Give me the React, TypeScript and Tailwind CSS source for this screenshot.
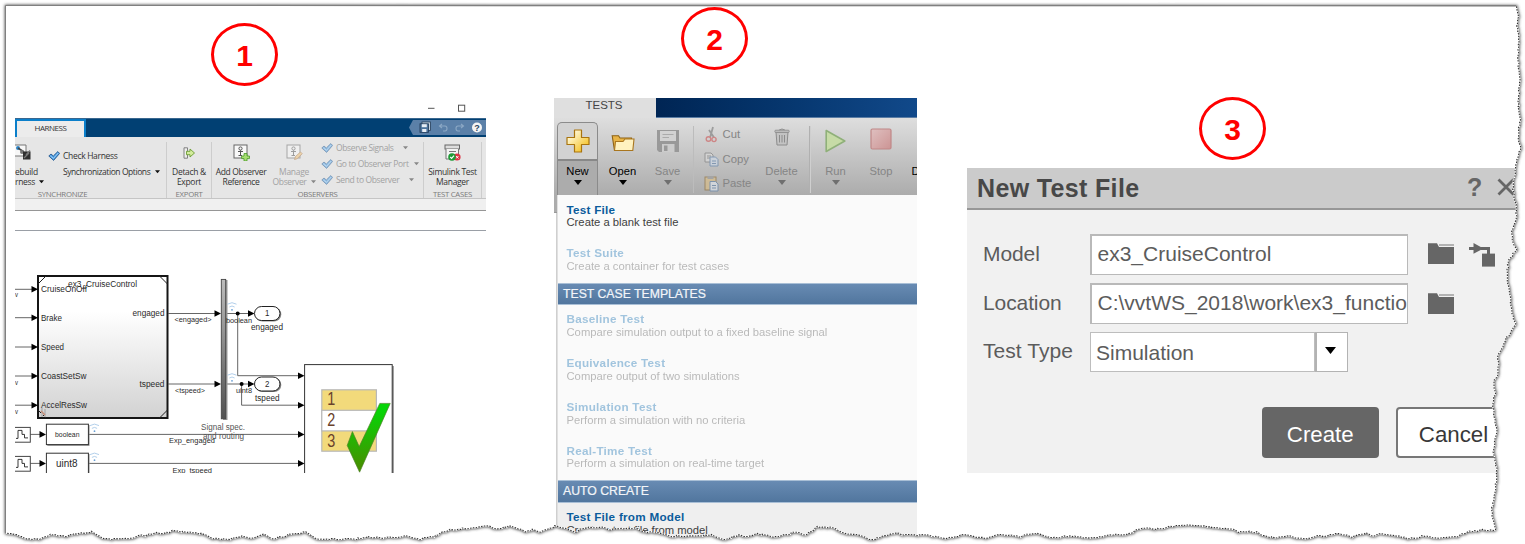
import React from "react";

/* ---------- shared pieces ---------- */

function StepBadge({ n, className }: { n: number; className: string }) {
  return (
    <div
      className={`flex h-[63px] w-[67px] shrink-0 items-center justify-center rounded-[50%] border-[3px] border-[#ff0000] pt-[2px] text-[30px] leading-none font-bold text-[#ff0000] ${className}`}
    >
      {n}
    </div>
  );
}

function Caret({ className }: { className: string }) {
  return (
    <svg viewBox="0 0 8 5" className={className}>
      <path d="M0 0H8L4 5Z" fill="currentColor" />
    </svg>
  );
}

/* ---------- panel 1: harness ribbon ---------- */

function Check({ faded = false }: { faded?: boolean }) {
  return (
    <svg viewBox="0 0 12 10" className={`h-[10px] w-[12px] shrink-0 ${faded ? "opacity-55" : ""}`}>
      <path d="M0.8 5L3 3L5.3 5L9.8 0.6L11.6 2.4L5.6 9.4Z" fill="#4a9be0" stroke="#1d4f86" strokeWidth="0.8" />
      <path d="M2.3 4.8L5.5 7.4L10.2 2" stroke="#a9d6fa" strokeWidth="0.9" fill="none" />
    </svg>
  );
}

function RebuildIcon() {
  return (
    <svg viewBox="0 0 16 16" className="h-4 w-4">
      <path d="M0 1H11V12H0" fill="#f7f7f7" stroke="#777" />
      <circle cx="3" cy="4" r="2" fill="#2f86c8" />
      <path d="M3 4L9 8" stroke="#444" strokeWidth="1.6" fill="none" />
      <circle cx="7" cy="8" r="2" fill="#777" />
      <rect x="8" y="7.5" width="7.5" height="8" fill="#2f2f2f" />
      <path d="M15 6.5L11 11M9 14L14 9" stroke="#777" strokeWidth="1.3" />
    </svg>
  );
}

function DetachIcon() {
  return (
    <svg viewBox="0 0 12 12" className="h-3 w-3">
      <path d="M1 .8H4.5V11.2H1Z" fill="#eee" stroke="#777" strokeWidth="0.9" />
      <path d="M3.5 4.3H7V2L11.5 6L7 10V7.7H3.5Z" fill="#d3ec9c" stroke="#6b9c33" strokeWidth="0.9" />
    </svg>
  );
}

function ObserverIcon({ pencil = false }: { pencil?: boolean }) {
  return (
    <svg viewBox="0 0 17 17" className={`h-[17px] w-[17px] ${pencil ? "opacity-50" : ""}`}>
      <rect x="1" y="1" width="13" height="13" fill="#f8f8f8" stroke="#666" />
      <circle cx="7.5" cy="4.5" r="1.6" fill="none" stroke="#555" />
      <path d="M7.5 6.3V12M5 7.5H10M5.5 11.5H9" stroke="#555" strokeWidth="1" />
      {pencil ? (
        <path d="M8.5 15.5L9.5 12.5L14.5 8L16.2 9.7L11.2 14.7Z" fill="#f1c173" stroke="#a66a30" strokeWidth="0.8" />
      ) : (
        <path d="M11 9.5H14V12H16.5V14.6H14V17H11V14.6H8.6V12H11Z" fill="#a6de71" stroke="#4a9a28" strokeWidth="0.8" />
      )}
    </svg>
  );
}

function TestManagerIcon() {
  return (
    <svg viewBox="0 0 17 17" className="h-[17px] w-[17px]">
      <rect x="1" y="1" width="14.5" height="4" fill="#ddd" stroke="#666" />
      <path d="M2 5V15H14.5V5" fill="#f3f3f3" stroke="#777" />
      <path d="M5 7.5H12" stroke="#777" />
      <circle cx="13" cy="13" r="3.6" fill="#dd3345" />
      <path d="M12 12L14.5 14.5M14.5 12L12 14.5" stroke="#fff" strokeWidth="0.9" />
      <circle cx="8" cy="13" r="3.8" fill="#1e9a36" />
      <path d="M6.2 13L7.6 14.4L10 11.6" stroke="#fff" strokeWidth="1.1" fill="none" />
    </svg>
  );
}

function QuickAccess() {
  return (
    <svg viewBox="0 0 77 15" className="h-[15px] w-[77px]">
      <path d="M0 7.5L4 0H77V15H4Z" fill="#5b80a8" />
      <rect x="13" y="2" width="8.5" height="8.5" fill="#c4d2e0" stroke="#243c58" strokeWidth="0.8" />
      <rect x="11" y="3.8" width="8.5" height="8.5" fill="#4c739c" stroke="#1f3754" strokeWidth="0.8" />
      <rect x="12.8" y="4.2" width="5" height="3" fill="#e7edf4" />
      <rect x="13.2" y="9" width="4.2" height="3" fill="#e7edf4" />
      <path d="M33 4L30.5 6L33 8M31 6H36Q38 6 38 8.5T36 11H34" stroke="#8ca8c5" strokeWidth="1.1" fill="none" />
      <path d="M52 4L54.5 6L52 8M54 6H49Q47 6 47 8.5T49 11H51" stroke="#8ca8c5" strokeWidth="1.1" fill="none" />
      <circle cx="68" cy="7.5" r="5" fill="#f4f4f4" />
      <text x="68" y="11" textAnchor="middle" fontSize="9" fontWeight="700" fill="#29435f">?</text>
    </svg>
  );
}

function Stack({ icon, lines, caret, muted, className }: { icon: React.ReactNode; lines: string[]; caret?: boolean; muted?: boolean; className: string }) {
  return (
    <div className={`flex shrink-0 flex-col items-center ${muted ? "text-[#a2a2a2]" : "text-[#333]"} ${className}`}>
      <div className="flex h-[21px] items-center justify-center">{icon}</div>
      <div className="mt-[3px] h-[11px] leading-[11px] whitespace-nowrap">{lines[0]}</div>
      <div className="flex h-[10px] items-center gap-1 leading-[10px] whitespace-nowrap">
        {lines[1]}
        {caret && <Caret className={`h-[3.5px] w-[5px] ${muted ? "text-[#888]" : "text-[#111]"}`} />}
      </div>
    </div>
  );
}

function Group({ label, className, children }: { label: string; className: string; children: React.ReactNode }) {
  return (
    <div className={`flex h-[56px] shrink-0 flex-col border-r border-[#cdcdcd] ${className}`}>
      <div className="flex h-[47px] shrink-0">{children}</div>
      <div className="pt-px text-center text-[7.8px] leading-[9px] tracking-[-0.3px] text-[#7b7b7b]">{label}</div>
    </div>
  );
}

function ObserverLine({ label, gap }: { label: string; gap: string }) {
  return (
    <div className="flex h-4 items-center text-[#a2a2a2]">
      <Check faded />
      <span className="ml-[3px] tracking-[-0.36px] whitespace-nowrap">{label}</span>
      <Caret className={`h-[3.5px] w-[5px] shrink-0 text-[#888] ${gap}`} />
    </div>
  );
}

function Wifi({ x, y }: { x: number; y: number }) {
  return (
    <g transform={`translate(${x} ${y})`} fill="none" stroke="#a9c9e8" strokeWidth="0.9">
      <path d="M-4.5 1.2Q0 -1.8 4.5 1.2M-2.6 4Q0 2 2.6 4" />
      <circle cx="0" cy="6.8" r="0.9" fill="#6a9fd4" stroke="none" />
    </g>
  );
}

function Arrow({ x, y }: { x: number; y: number }) {
  return <path d={`M${x - 6.5} ${y - 3.3}L${x} ${y}L${x - 6.5} ${y + 3.3}Z`} fill="#000" />;
}

function T({ x, y, w, size = 8.3, fill = "#2a2a2a", children }: { x: number; y: number; w: number; size?: number; fill?: string; children: string }) {
  return (
    <text x={x} y={y} fontSize={size} fill={fill} textLength={w} lengthAdjust="spacingAndGlyphs">
      {children}
    </text>
  );
}

function Diagram() {
  const inputs: [string, number, number][] = [
    ["CruiseOnOff", 289.3, 46],
    ["Brake", 317.7, 21],
    ["Speed", 347, 23],
    ["CoastSetSw", 376, 45.5],
    ["AccelResSw", 405.2, 46],
  ];
  return (
    <svg viewBox="15 231 471 242" className="h-[242px] w-[471px] shrink-0">
      <defs>
        <linearGradient id="block" x1="0" y1="0" x2="0" y2="1">
          <stop offset="0.25" stopColor="#ffffff" />
          <stop offset="1" stopColor="#d2d2d2" />
        </linearGradient>
        <linearGradient id="bar" x1="0" y1="0" x2="0" y2="1">
          <stop offset="0" stopColor="#bcbcbc" />
          <stop offset="1" stopColor="#505050" />
        </linearGradient>
        <linearGradient id="tick" x1="0" y1="0" x2="0" y2="1">
          <stop offset="0.1" stopColor="#06d506" />
          <stop offset="1" stopColor="#4b8b00" />
        </linearGradient>
      </defs>
      <rect x="38" y="276" width="129.5" height="142" fill="url(#block)" stroke="#151515" strokeWidth="2" />
      <path d="M38 284L46 276M159.5 276L167.5 284M159.5 418L167.5 410M38 410L46 418" stroke="#222" strokeWidth="1" />
      <path d="M42 408V417M45 409V417" stroke="#bbb" strokeWidth="2" />
      <path d="M41 411L45 415" stroke="#c68d77" strokeWidth="1.5" />
      <T x={68} y={287.3} w={69}>ex3_CruiseControl</T>
      {inputs.map(([name, y, w]) => (
        <g key={name}>
          <path d={`M15 ${y}H33`} stroke="#555" strokeWidth="0.9" />
          <Arrow x={38} y={y} />
          <T x={41} y={y + 3} w={w}>{name}</T>
        </g>
      ))}
      <T x={15} y={297} w={3} size={7}>v</T>
      <T x={15} y={385} w={3} size={7}>v</T>
      <T x={15} y={414} w={3} size={7}>v</T>
      <T x={132.5} y={316.3} w={32}>engaged</T>
      <T x={139.5} y={387} w={25}>tspeed</T>
      <path d="M168 313.5H216M168 384H216M227 313.5H250M227 384H250M237.7 313.5V375.7H300M241.6 384V405.2H300M88 434.4H300M88 463.4H300M30 434.4H42M30 463.4H42" stroke="#555" strokeWidth="0.9" fill="none" />
      <Arrow x={221} y={313.5} />
      <Arrow x={221} y={384} />
      <T x={174.5} y={322} w={37} size={7.6}>{"<engaged>"}</T>
      <T x={175} y={392.7} w={30} size={7.6}>{"<tspeed>"}</T>
      <rect x="223" y="280" width="4.5" height="140" fill="#999" />
      <rect x="221.3" y="279.4" width="4.4" height="139.4" fill="url(#bar)" stroke="#444" strokeWidth="0.9" />
      <Wifi x={232} y={303} />
      <Wifi x={232} y={374} />
      {[313.5, 384].map((y, i) => (
        <g key={y}>
          <circle cx={i ? 241.6 : 237.7} cy={y} r="2" fill="#000" />
          <Arrow x={254.5} y={y} />
          <rect x="255.3" y={y - 6.3} width="26" height="14.4" rx="7.2" fill="#888" />
          <rect x="254.5" y={y - 7} width="25.5" height="14" rx="7" fill="#fff" stroke="#222" strokeWidth="1" />
          <T x={265} y={y + 2.9} w={4.4}>{String(i + 1)}</T>
        </g>
      ))}
      <T x={226} y={322.6} w={26} size={7.6}>boolean</T>
      <T x={236} y={393} w={16} size={7.6}>uint8</T>
      <T x={251} y={330} w={32}>engaged</T>
      <T x={255} y={400.7} w={24.5}>tspeed</T>
      <T x={201} y={429.5} w={44} fill="#555">Signal spec.</T>
      <T x={203} y={439} w={41} fill="#555">and routing</T>
      <T x={169} y={443} w={46} size={7.8}>Exp_engaged</T>
      <T x={172.5} y={472.6} w={39.5} size={7.8}>Exp_tspeed</T>
      {[434.4, 463.4].map((y) => (
        <g key={y}>
          <rect x="10" y={y - 7} width="20.3" height="14.8" fill="#fff" stroke="#444" strokeWidth="1" />
          <path d={`M16 ${y + 4}H18V${y - 4}H22V${y}H24.5V${y + 3.5}H28`} stroke="#222" fill="none" strokeWidth="0.9" />
          <Arrow x={46} y={y} />
          <rect x="47.3" y={y - 9.4} width="42.2" height="20.8" fill="#888" />
          <rect x="46.4" y={y - 10.2} width="42" height="20.4" fill="#fff" stroke="#333" strokeWidth="1" />
          <Wifi x={94.5} y={y - 10} />
        </g>
      ))}
      <T x={55} y={437} w={24.5} size={7.4}>boolean</T>
      <T x={56} y={467} w={21.5} size={10}>uint8</T>
      <rect x="304.6" y="364.6" width="87.6" height="120" fill="#fff" stroke="#333" strokeWidth="1" />
      <path d="M393 366V480" stroke="#444" strokeWidth="1" />
      {[375.7, 405.2, 434.4, 463.4].map((y) => (
        <Arrow key={y} x={304.5} y={y} />
      ))}
      <rect x="321.8" y="389.8" width="54.6" height="61.4" fill="#f2da7b" stroke="#b8b8b8" strokeWidth="1.2" />
      <rect x="321.8" y="410.3" width="54.6" height="20.6" fill="#fff" stroke="#b8b8b8" strokeWidth="1.2" />
      <T x={327.3} y={405.3} w={8} size={17.5} fill="#6a422c">1</T>
      <T x={327.3} y={426} w={8} size={17.5} fill="#6a422c">2</T>
      <T x={327.3} y={447} w={8} size={17.5} fill="#6a422c">3</T>
      <path d="M379.8 403.4H390.2L359.6 472.2L347.2 445.4L352.4 431.6L359.2 446.6Z" fill="url(#tick)" stroke="#4d8428" strokeWidth="0.7" />
    </svg>
  );
}

function HarnessPanel() {
  return (
    <section className="flex h-[369px] w-[471px] flex-col overflow-hidden bg-white">
      <div className="flex h-[14px] justify-end pr-[20px]">
        <svg viewBox="0 0 40 14" className="h-[14px] w-10">
          <path d="M2 4.3H8.5" stroke="#555" strokeWidth="1" />
          <rect x="32.5" y="1.2" width="6.2" height="6" fill="none" stroke="#555" strokeWidth="1" />
        </svg>
      </div>
      <div className="flex h-[19px] items-end justify-between border-t border-[#39678f] bg-[#014073]">
        <div className="flex h-[18px] w-[71px] items-center justify-center border-x-2 border-t-2 border-[#0b7fca] bg-[#ececec] pb-[2px] font-['Open_Sans',sans-serif] text-[8px] tracking-[-0.45px] text-[#333]">
          HARNESS
        </div>
        <div className="mb-[2px] flex h-[15px]"><QuickAccess /></div>
      </div>
      <div className="flex h-[62px] shrink-0 items-end border-b border-[#c5c5c5] bg-[#e6e6e6] font-['Open_Sans',sans-serif] text-[8.5px] tracking-[-0.32px] text-[#333]">
        <Group label="SYNCHRONIZE" className="w-[152px] [&>div:last-child]:pr-[56px]">
          <div className="flex w-[30px] flex-col items-start">
            <div className="-mt-[2px] flex h-[23px] items-center"><RebuildIcon /></div>
            <div className="mt-[3px] h-[11px] leading-[11px]">ebuild</div>
            <div className="flex h-[10px] items-center gap-1 leading-[10px]">
              rness <Caret className="h-[3.5px] w-[5px] text-[#111]" />
            </div>
          </div>
          <div className="flex flex-col pt-[6px] pl-[3px]">
            <div className="flex h-4 items-center gap-[3px]"><Check />Check Harness</div>
            <div className="flex h-4 items-center gap-[5px] pl-[15px] tracking-[-0.43px] whitespace-nowrap">
              Synchronization Options <Caret className="h-[3.5px] w-[5px] text-[#111]" />
            </div>
          </div>
        </Group>
        <Group label="EXPORT" className="w-[45px]">
          <Stack className="w-[44px]" icon={<DetachIcon />} lines={["Detach &", "Export"]} />
        </Group>
        <Group label="OBSERVERS" className="w-[212px]">
          <Stack className="w-[58px]" icon={<ObserverIcon />} lines={["Add Observer", "Reference"]} />
          <Stack className="w-[48px]" icon={<ObserverIcon pencil />} lines={["Manage", "Observer"]} caret muted />
          <div className="-mt-[2px] flex flex-col pl-[3px]">
            <ObserverLine label="Observe Signals" gap="ml-[9px]" />
            <ObserverLine label="Go to Observer Port" gap="ml-[5px]" />
            <ObserverLine label="Send to Observer" gap="ml-[10px]" />
          </div>
        </Group>
        <Group label="TEST CASES" className="w-[58px]">
          <Stack className="w-[57px]" icon={<TestManagerIcon />} lines={["Simulink Test", "Manager"]} />
        </Group>
      </div>
      <div className="h-[12px] shrink-0 border-b border-[#969696] bg-[#f0f0f0]" />
      <div className="h-[20px] shrink-0 border-b border-[#9a9fa6] bg-white" />
      <Diagram />
    </section>
  );
}

/* ---------- panel 2: test manager menu ---------- */

function PlusIcon() {
  return (
    <svg viewBox="0 0 24 24" className="h-6 w-6">
      <defs>
        <linearGradient id="gold" x1="0" y1="0" x2="1" y2="1">
          <stop offset="0.15" stopColor="#fffbe0" />
          <stop offset="1" stopColor="#f3b600" />
        </linearGradient>
      </defs>
      <path d="M8.5 1H15.5V8.5H23V15.5H15.5V23H8.5V15.5H1V8.5H8.5Z" fill="url(#gold)" stroke="#a9740e" strokeWidth="1.2" strokeLinejoin="round" />
    </svg>
  );
}

function OpenIcon() {
  return (
    <svg viewBox="0 0 24 18" className="h-[18px] w-6">
      <path d="M3.5 16.5L1.2 1.8H7.5L9 4H20.5V8" fill="#e8b447" stroke="#8d6215" strokeWidth="1.1" />
      <path d="M3.5 16.5L4.5 7.5H12L14 5H23L21.8 16.5Z" fill="#fff2c0" stroke="#a9761f" strokeWidth="1.1" />
    </svg>
  );
}

function SaveIcon() {
  return (
    <svg viewBox="0 0 24 24" className="h-6 w-6">
      <path d="M1 1H23V23H3L1 21Z" fill="#999" />
      <rect x="4" y="2" width="16" height="10" fill="#d2d2d2" />
      <path d="M6.5 5.5H17.5M6.5 8.5H13" stroke="#aaa" />
      <rect x="6" y="15" width="12.5" height="8" fill="#ccc" />
      <rect x="8" y="16.5" width="3.5" height="5.5" fill="#999" />
    </svg>
  );
}

function CutIcon() {
  return (
    <svg viewBox="0 0 15 17" className="h-[17px] w-[15px] opacity-60">
      <path d="M9 1L6.2 11M5 4L10 11.5" stroke="#777" strokeWidth="1.8" />
      <circle cx="4.5" cy="13" r="2.3" fill="none" stroke="#c55" strokeWidth="1.4" />
      <circle cx="10" cy="13.5" r="2.1" fill="none" stroke="#c55" strokeWidth="1.4" />
    </svg>
  );
}

function CopyIcon() {
  return (
    <svg viewBox="0 0 15 15" className="h-[15px] w-[15px] opacity-60">
      <path d="M1 1H7L9 3V10H1Z" fill="#ddd" stroke="#777" />
      <path d="M3 4H7M3 6H6" stroke="#777" />
      <path d="M6 5H11.5L14 7.5V14H6Z" fill="#cfdbea" stroke="#5b7fa8" />
      <path d="M8 9H12M8 11.5H12" stroke="#5b7fa8" />
    </svg>
  );
}

function PasteIcon() {
  return (
    <svg viewBox="0 0 15 17" className="h-[17px] w-[15px] opacity-60">
      <rect x="1" y="2" width="11" height="13" fill="#dfc084" stroke="#8b6b34" />
      <rect x="3.5" y="1" width="6" height="3" fill="#999" />
      <path d="M6 6.5H11.5L14 9V16H6Z" fill="#e6ecf4" stroke="#5b7fa8" />
      <path d="M8 10.5H12M8 13H12" stroke="#5b7fa8" />
    </svg>
  );
}

function TrashIcon() {
  return (
    <svg viewBox="0 0 16 18" className="h-[18px] w-4">
      <path d="M2 4H14L13 17H3Z" fill="#c3c3c3" stroke="#8c8c8c" />
      <path d="M5.5 7V14.5M8 7V14.5M10.5 7V14.5" stroke="#8c8c8c" />
      <path d="M5 2.2Q8 -0.2 11 2.2" stroke="#8c8c8c" fill="none" />
      <rect x="0.8" y="2.2" width="14.4" height="2.3" rx="1" fill="#bbb" stroke="#8c8c8c" strokeWidth="0.8" />
    </svg>
  );
}

function RunIcon() {
  return (
    <svg viewBox="0 0 21 24" className="h-6 w-[21px]">
      <path d="M1.2 1.5L19.8 12L1.2 22.5Z" fill="#c6dba6" stroke="#8fb079" strokeWidth="1.6" strokeLinejoin="round" />
    </svg>
  );
}

function StopIcon() {
  return (
    <svg viewBox="0 0 22 22" className="h-[22px] w-[22px]">
      <defs>
        <linearGradient id="stop" x1="0" y1="0" x2="1" y2="1">
          <stop offset="0" stopColor="#dfc0c0" />
          <stop offset="1" stopColor="#cc9494" />
        </linearGradient>
      </defs>
      <rect x="1" y="1" width="20" height="20" rx="1.5" fill="url(#stop)" stroke="#c08888" strokeWidth="1.2" />
    </svg>
  );
}

function Tool({ icon, label, caret, strong, className }: { icon: React.ReactNode; label: string; caret?: boolean; strong?: boolean; className: string }) {
  return (
    <div className={`flex shrink-0 flex-col items-center ${strong ? "text-black" : "text-[#858585]"} ${className}`}>
      <div className="flex h-[46px] items-center justify-center">{icon}</div>
      <div className="h-[14px] text-[11.2px] leading-[14px]">{label}</div>
      {caret && <Caret className={`mt-[2px] h-[5px] w-2 ${strong ? "text-black" : "text-[#6f6f6f]"}`} />}
    </div>
  );
}

function ClipRow({ icon, label }: { icon: React.ReactNode; label: string }) {
  return (
    <div className="flex h-[24.7px] items-center gap-[4px] text-[11.3px] text-[#858585]">
      <div className="flex w-[15px] justify-center">{icon}</div>
      {label}
    </div>
  );
}

function MenuItem({ title, text, on }: { title: string; text: string; on?: boolean }) {
  return (
    <div className={`h-[43.8px] pt-[8.5px] pl-[8.5px] leading-[12.5px] ${on ? "" : "opacity-90"}`}>
      <div className={`text-[11.7px] font-bold tracking-[0.26px] ${on ? "text-[#0b5c9c]" : "text-[#98bfdb]"}`}>{title}</div>
      <div className={`text-[11.25px] ${on ? "text-[#404040]" : "text-[#b3b3b3]"}`}>{text}</div>
    </div>
  );
}

function MenuHeading({ children }: { children: string }) {
  return (
    <div className="flex h-[22.4px] items-center border-y border-[#a9bfd6] bg-linear-to-b from-[#688bb3] to-[#51769e] pl-[5px] text-[12.25px] text-[#f2f5f9] [-webkit-text-stroke:0.2px_#f2f5f9]">
      {children}
    </div>
  );
}

function TestsPanel() {
  return (
    <section className="flex h-[446px] w-[363px] flex-col overflow-hidden">
      <div className="flex h-5 shrink-0 bg-[#dfdfdf]">
        <div className="flex w-[102px] justify-center pr-[2px] text-[11.5px] leading-[15px] text-[#444]">TESTS</div>
        <div className="grow border-b border-[#5a7da5] bg-linear-to-r from-[#002554] to-[#11498a]" />
      </div>
      <div className="flex h-[77px] shrink-0 bg-linear-to-b from-[#dedede] to-[#acacac] pl-[3px]">
        <div className="mt-[4px] flex h-[73px] w-[41px] shrink-0 flex-col items-center rounded-t-[5px] border border-b-0 border-[#8b8b8b] bg-[#d2d2d2]">
          <div className="flex h-[36px] items-center"><PlusIcon /></div>
          <div className="flex w-full grow flex-col items-center border-t-2 border-[#888] bg-[#acacac] pt-[3px]">
            <div className="h-[14px] text-[11.2px] leading-[14px] text-black">New</div>
            <Caret className="mt-[2px] h-[5px] w-2 text-black" />
          </div>
        </div>
        <Tool className="w-[49px]" icon={<div className="pt-[3px]"><OpenIcon /></div>} label="Open" caret strong />
        <Tool className="w-[41px]" icon={<SaveIcon />} label="Save" caret />
        <div className="mt-2 ml-[5px] flex h-[67px] w-[49px] shrink-0 flex-col justify-start border-l border-[#bcbcbc] pl-[9.5px]">
          <div className="-mt-1">
            <ClipRow icon={<CutIcon />} label="Cut" />
            <ClipRow icon={<CopyIcon />} label="Copy" />
            <ClipRow icon={<PasteIcon />} label="Paste" />
          </div>
        </div>
        <Tool className="ml-[16px] w-[47px]" icon={<div className="-mt-2"><TrashIcon /></div>} label="Delete" caret />
        <div className="mt-2 ml-[4px] h-[67px] w-[1.5px] shrink-0 border-r border-[#cfcfcf] bg-[#b0b0b0]" />
        <Tool className="w-[50px]" icon={<RunIcon />} label="Run" caret />
        <Tool className="w-[41px]" icon={<div className="-mt-1"><StopIcon /></div>} label="Stop" />
        <div className="pt-[46px] pl-[10px] text-[11.2px] leading-[14px] text-black">D</div>
      </div>
      <div className="flex grow">
        <div className="flex w-[3px] shrink-0 flex-col">
          <div className="h-[18px] border-b border-[#999] bg-[#acacac]" />
          <div className="grow border-r border-[#cfcfcf] bg-white" />
        </div>
        <div className="grow border-l border-[#e0e0e0] bg-[#fafafa]">
          <MenuItem on title="Test File" text="Create a blank test file" />
          <MenuItem title="Test Suite" text="Create a container for test cases" />
          <MenuHeading>TEST CASE TEMPLATES</MenuHeading>
          <MenuItem title="Baseline Test" text="Compare simulation output to a fixed baseline signal" />
          <MenuItem title="Equivalence Test" text="Compare output of two simulations" />
          <MenuItem title="Simulation Test" text="Perform a simulation with no criteria" />
          <MenuItem title="Real-Time Test" text="Perform a simulation on real-time target" />
          <MenuHeading>AUTO CREATE</MenuHeading>
          <div className="h-[44px] bg-[#efefef]">
            <MenuItem on title="Test File from Model" text="Create a test file from model" />
          </div>
        </div>
      </div>
    </section>
  );
}

/* ---------- panel 3: dialog ---------- */

function Folder() {
  return (
    <svg viewBox="0 0 26 21" className="h-[21px] w-[26px] shrink-0">
      <path d="M0 0.3H9L11 4H26V21H0Z" fill="#666" />
      <path d="M11 2H26" stroke="#8a8a8a" strokeWidth="1.2" />
    </svg>
  );
}

function ModelIcon() {
  return (
    <svg viewBox="0 0 26 24" className="h-6 w-[26px] shrink-0">
      <path d="M0 5.4H8M12 5.4H19.5V12" stroke="#666" strokeWidth="3" fill="none" />
      <path d="M4.5 0L14.5 5.4L4.5 10.8Z" fill="#666" />
      <rect x="13" y="10.6" width="13" height="13" fill="#666" />
    </svg>
  );
}

function Field({ label, value, children }: { label: string; value: string; children: React.ReactNode }) {
  return (
    <div className="mb-2 flex h-[41px] items-center">
      <div className="w-[107px] shrink-0 pb-[2px] text-[21px] leading-6 tracking-[-0.1px]">{label}</div>
      <div className="flex h-[41px] w-[318px] shrink-0 items-center overflow-hidden border-t-2 border-r border-b border-l-2 border-[#b9b9b9] bg-white pb-[3px] pl-[5.5px] text-[21px] leading-6 whitespace-nowrap">
        {value}
      </div>
      <div className="ml-[20px] flex items-start gap-[15px]">{children}</div>
    </div>
  );
}

function DialogPanel() {
  return (
    <section className="flex h-[305px] w-[558px] flex-col overflow-hidden bg-[#f1f1f1] text-[#5c5c5c]">
      <header className="flex h-[42px] shrink-0 items-center border-b-2 border-[#979797] bg-[#cbcbcb] pl-[10px]">
        <h2 className="w-[490px] text-[25px] leading-none font-bold tracking-[0.35px] text-[#484848]">New Test File</h2>
        <span className="w-[30px] pb-[2px] text-[25px] leading-none font-bold text-[#666]">?</span>
        <svg viewBox="0 0 18 18" className="mb-[2px] h-[18px] w-[18px]">
          <path d="M1.5 1.5L16.5 16.5M16.5 1.5L1.5 16.5" stroke="#666" strokeWidth="2.8" />
        </svg>
      </header>
      <div className="pt-6 pl-[16px]">
        <Field label="Model" value="ex3_CruiseControl"><Folder /><ModelIcon /></Field>
        <Field label="Location" value={"C:\\vvtWS_2018\\work\\ex3_functio"}><Folder /></Field>
        <div className="flex h-10 items-center">
          <div className="w-[107px] shrink-0 pb-[2px] text-[21px] leading-6 tracking-[0.05px]">Test Type</div>
          <div className="flex h-10 w-[225px] items-center border border-[#bdbdbd] bg-white pt-[2px] pl-[5px] text-[21px] leading-6">Simulation</div>
          <div className="flex h-10 w-[33px] items-center justify-center border border-l-2 border-[#b3b3b3] bg-white">
            <Caret className="-mt-1 mr-1 h-[7px] w-[11px] text-black" />
          </div>
        </div>
      </div>
      <div className="mt-[35px] flex gap-[17px] pl-[295px] text-[22.3px]">
        <button className="h-[51px] w-[116.5px] rounded-[4px] bg-[#666] pt-[4px] text-center text-white">Create</button>
        <button className="h-[51px] w-[116px] rounded-[4px] border-2 border-[#777] bg-white pt-[4px] text-center text-[#383838]">Cancel</button>
      </div>
    </section>
  );
}

/* ---------- torn paper edge ---------- */

const EDGE: [number, number][] = [
  [1516, 6], [1518.5, 14], [1517, 24], [1519, 40], [1518, 60], [1519.5, 80], [1518, 100], [1520, 120], [1518.5, 136],
  [1520.6, 150], [1517.7, 158], [1517, 163], [1512.7, 183], [1514, 197], [1516.7, 208], [1516, 218], [1511.7, 233],
  [1511.7, 240], [1516.7, 250], [1508.7, 260], [1506.7, 280], [1510.7, 297], [1511.7, 313], [1516, 325], [1505, 340],
  [1498, 357], [1498.7, 373], [1494.3, 381], [1495, 392], [1492.7, 405], [1494.3, 417], [1496.7, 430], [1493.3, 450],
  [1496.7, 470], [1495.7, 487], [1492.7, 503], [1491.7, 515], [1496, 530],
  [1483, 530], [1467, 532], [1458, 537], [1433, 538], [1425, 536], [1410, 539], [1397, 536], [1382, 534], [1373, 536],
  [1366, 533], [1352, 537], [1338, 533], [1328, 536], [1318, 536], [1310, 538], [1297, 539], [1290, 536], [1277, 538],
  [1263, 536], [1257, 532], [1238, 532], [1235, 530], [1222, 528], [1200, 526], [1178, 525], [1160, 529], [1142, 528],
  [1128, 534], [1110, 535], [1090, 538], [1070, 536], [1052, 538], [1035, 533], [1020, 537], [1002, 534], [985, 538],
  [965, 535], [945, 538], [925, 535], [902, 535], [897, 533], [882, 537], [870, 540], [862, 536], [842, 533], [835, 528],
  [818, 527], [805, 535], [797, 532], [775, 537], [758, 534], [748, 537], [738, 535], [723, 540], [712, 535], [695, 536],
  [670, 536], [660, 533], [645, 532], [635, 528], [622, 529], [610, 530], [602, 527], [582, 528], [575, 532], [565, 528],
  [555, 526], [545, 530], [540, 532], [533, 530], [527, 532], [511, 526], [495, 529], [489, 526], [473, 528], [448, 530],
  [436, 536], [419, 539], [406, 536], [388, 538], [368, 537], [356, 539], [317, 539], [306, 532], [291, 534], [272, 539],
  [264, 534], [252, 539], [242, 536], [230, 539], [213, 539], [204, 534], [194, 533], [173, 531], [162, 534], [156, 532],
  [145, 536], [138, 535], [131, 539], [104, 539], [92, 532], [82, 533], [65, 536], [51, 535], [39, 539], [27, 539],
  [17, 535], [6, 533],
];

function roughen(points: [number, number][]) {
  const out: string[] = [];
  let seed = 17;
  for (let i = 0; i < points.length - 1; i++) {
    const [x1, y1] = points[i];
    const [x2, y2] = points[i + 1];
    const steps = Math.max(1, Math.round(Math.hypot(x2 - x1, y2 - y1) / 2.5));
    for (let k = 0; k < steps; k++) {
      seed = (seed * 1103515245 + 12345) % 2147483648;
      const j = (seed / 2147483648 - 0.5) * 1.6;
      const t = k / steps;
      out.push(`${(x1 + (x2 - x1) * t + j).toFixed(1)} ${(y1 + (y2 - y1) * t + j).toFixed(1)}`);
    }
  }
  out.push(points[points.length - 1].join(" "));
  return out.join("L");
}

const TORN = roughen(EDGE);
const PAPER = `M6 6L${TORN}Z`;

function TornEdge() {
  return (
    <svg viewBox="0 0 1525 544" className="pointer-events-none absolute inset-0 h-[544px] w-[1525px]">
      <defs>
        <filter id="soft" filterUnits="userSpaceOnUse" x="-10" y="-10" width="1550" height="570">
          <feGaussianBlur stdDeviation="1.6" />
        </filter>
        <mask id="outside" maskUnits="userSpaceOnUse" x="0" y="0" width="1525" height="544">
          <rect width="1525" height="544" fill="white" />
          <path d={PAPER} fill="black" />
        </mask>
      </defs>
      <g mask="url(#outside)">
        <rect width="1525" height="544" fill="white" />
        <path d={PAPER} fill="#444" stroke="#444" strokeWidth="2.4" filter="url(#soft)" />
      </g>
      <path d={`M${TORN}`} fill="none" stroke="#fff" strokeWidth="1.4" />
      <path d={`M${TORN}`} fill="none" stroke="#333" strokeWidth="1.1" strokeDasharray="1.5 1.3" />
      <path d="M5.5 533V5.5H1516" fill="none" stroke="#808080" strokeWidth="1" />
    </svg>
  );
}

export default function App() {
  return (
    <main className="relative flex h-[544px] w-[1525px] items-start overflow-hidden bg-white pl-[15px] font-['Liberation_Sans',Arial,sans-serif]">
      <div className="flex w-[471px] shrink-0 flex-col gap-[18px] pt-[23px]">
        <StepBadge n={1} className="ml-[196px]" />
        <HarnessPanel />
      </div>
      <div className="ml-[68px] flex w-[363px] shrink-0 flex-col gap-[28px] pt-[7px]">
        <StepBadge n={2} className="ml-[127px]" />
        <TestsPanel />
      </div>
      <div className="ml-[50px] flex w-[558px] shrink-0 flex-col gap-[8px] pt-[97px]">
        <StepBadge n={3} className="ml-[232px]" />
        <DialogPanel />
      </div>
      <TornEdge />
    </main>
  );
}
